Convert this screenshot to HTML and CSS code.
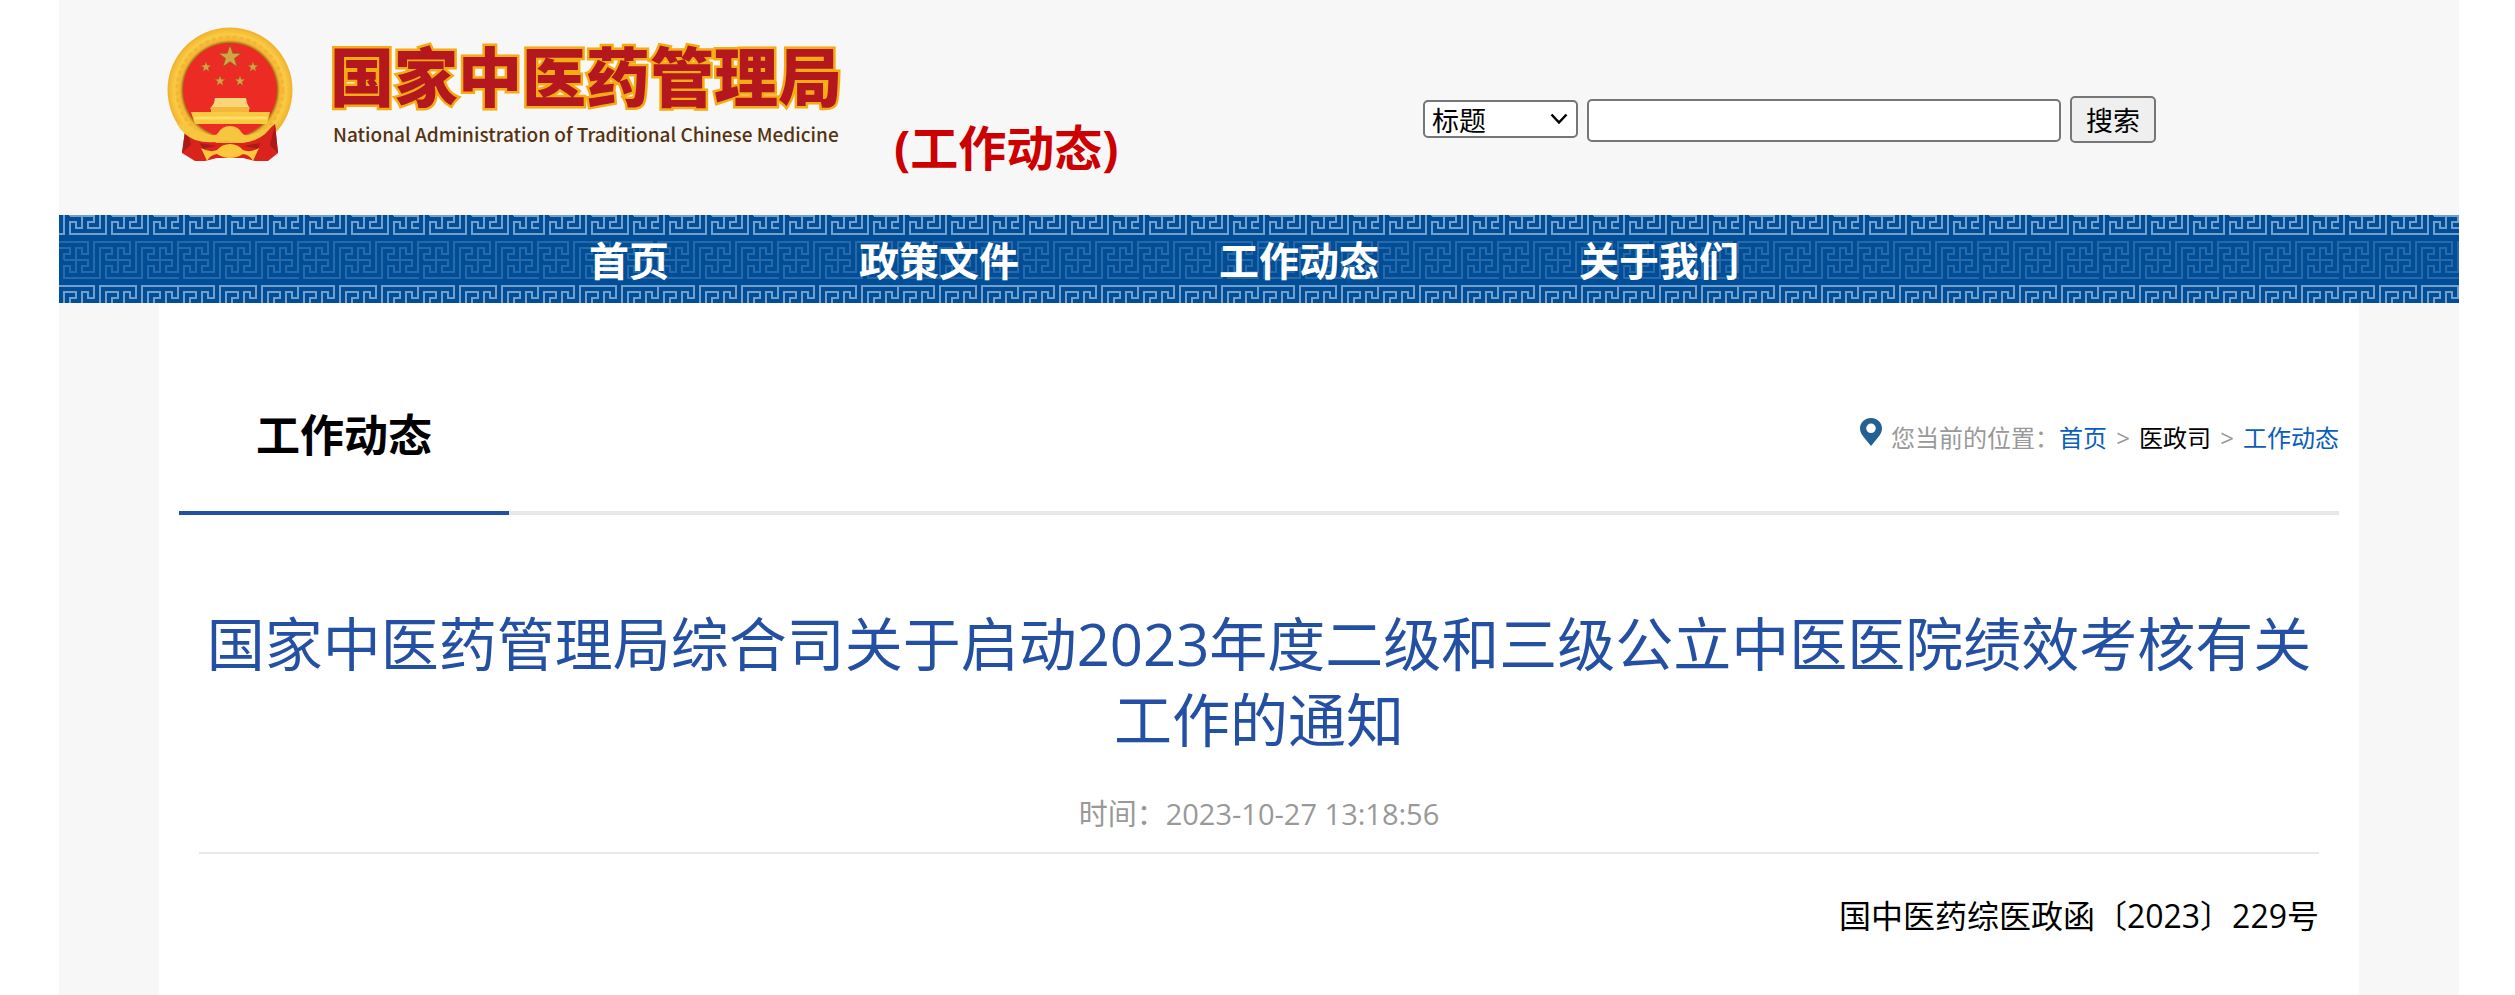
FILE: index.html
```html
<!DOCTYPE html>
<html lang="zh-CN">
<head>
    <meta charset="UTF-8">
    <meta name="viewport" content="width=device-width, initial-scale=1.0">
    <title>国家中医药管理局 - 工作动态</title>
    <link rel="stylesheet" href="styles.css">
</head>
<body>

    <div class="page">
        <header class="header">
            <svg class="emblem" viewBox="0 0 127 135" aria-hidden="true">
                <defs>
                    <path id="star" d="M0-10 2.4-3.1 9.5-3.1 3.8 1.2 5.9 8.1 0 4-5.9 8.1-3.8 1.2-9.5-3.1-2.4-3.1z"/>
                    <radialGradient id="gold" gradientUnits="userSpaceOnUse" cx="63" cy="63" r="63">
                        <stop offset=".75" stop-color="#a8741c"/>
                        <stop offset=".79" stop-color="#f2b632"/>
                        <stop offset=".88" stop-color="#fbcb45"/>
                        <stop offset="1" stop-color="#eeb02c"/>
                    </radialGradient>
                </defs>
                <circle cx="63" cy="63" r="62.5" fill="url(#gold)"/>
                <circle cx="63" cy="63" r="53" fill="none" stroke="#f3b537" stroke-width="3" stroke-dasharray="4 3"/>
                <circle cx="63" cy="63" r="47" fill="#ec2b24"/>
                <!-- 五星 -->
                <g fill="#d3a443" stroke="#8f5a1c" stroke-width=".6">
                    <use href="#star" transform="translate(63 30) scale(1.2)"/>
                    <use href="#star" transform="translate(39 40) scale(.55)"/>
                    <use href="#star" transform="translate(86 40) scale(.55)"/>
                    <use href="#star" transform="translate(53 54) scale(.55)"/>
                    <use href="#star" transform="translate(73 54) scale(.55)"/>
                </g>
                <!-- 天安门 -->
                <path d="M48 71h31l1 5 3 6H43l4-6z" fill="#fbd678"/>
                <path d="M44 80h38v6H44z" fill="#f4b63c"/>
                <path d="M24 85h79l-3 12H28z" fill="#fbc93f"/>
                <path d="M27 91h73" stroke="#fde06a" stroke-width="3"/>
                <!-- 绶带 -->
                <path d="M19 97 34 110 50 116H76L92 110 108 97 111 126 101 134 88 134 76 131H50l-12 3H28L15 126z" fill="#d9231d"/>
                <path d="M19 97 24 118 15 126zM108 97 103 118 111 126zM33 116l16 3-14 3zM93 116l-16 3 14 3z" fill="#a91a18"/>
                <path d="M20 97q10 8 24 11 5 1 7-2 4-7 12-7t12 7q2 3 7 2 14-3 24-11-6 11-18 16-10 4-20 2-3-1-5-1-5-1-5-1-5 2-10 2-10 1-20-2-12-5-18-16z" fill="#f8c63e"/>
                <path d="M34 121q9 5 16 2 5-6 13-6t13 6q7 3 16-2l-6 13q-3-6-10-7-6 4-13 4t-13-4q-7 1-10 7z" fill="#fbc83d"/>
            </svg>
            <div class="brand">
                <div class="brand-name">国家中医药管理局</div>
                <div class="brand-en">National Administration of Traditional Chinese Medicine</div>
            </div>
            <div class="channel">(工作动态)</div>
            <form class="search">
                <select class="search-type" aria-label="搜索范围">
                    <option>标题</option>
                </select>
                <input class="search-text" type="text" aria-label="关键词">
                <button class="search-btn" type="button">搜索</button>
            </form>
        </header>

        <nav class="nav">
            <a class="nav-home" href="#">首页</a>
            <a href="#">政策文件</a>
            <a href="#">工作动态</a>
            <a href="#">关于我们</a>
        </nav>

        <main class="content">
            <div class="content-head">
                <h2 class="column-title">工作动态</h2>
                <div class="position">
                    <svg class="pin" viewBox="0 0 22 28" aria-hidden="true">
                        <path fill="#245f93" fill-rule="evenodd" d="M11 0C5 0 0 4.500 0 10.500 0 14 2 17 4 19.500L11 28l7-8.500C20 17 22 14 22 10.500 22 4.500 17 0 11 0zm0 5.500a4.800 4.800 0 1 1 0 9.600 4.800 4.800 0 0 1 0-9.600z"/>
                    </svg>
                    <span>您当前的位置：</span><a href="#">首页</a><span class="sep">&gt;</span><a class="dept" href="#">医政司</a><span class="sep">&gt;</span><a href="#">工作动态</a>
                </div>
            </div>

            <article class="article">
                <h1 class="article-title">国家中医药管理局综合司关于启动2023年度二级和三级公立中医医院绩效考核有关工作的通知</h1>
                <p class="article-time">时间：2023-10-27 13:18:56</p>
                <p class="doc-number">国中医药综医政函〔2023〕229号</p>
            </article>
        </main>
    </div>

</body>
</html>
```
FILE: styles.css
```css
/* 全局 */
* {
    box-sizing: border-box;
}

body {
    margin: 0;
    background-color: #fff;
    color: #000;
    font-family: "Open Sans", "Noto Sans CJK SC", sans-serif;
}

a {
    text-decoration: none;
}

.page {
    min-height: 100vh;
    margin: 0 56px 0 59px;
    background-color: #f7f7f7;
    display: flex;
    flex-direction: column;
}

/* 页头 */
.header {
    height: 215px;
    padding: 27px 303px 0 108px;
    display: flex;
    align-items: flex-start;
}

.emblem {
    width: 127px;
    height: 135px;
    flex: none;
}

.brand {
    margin: 10px 0 0 36px;
    white-space: nowrap;
}

.brand-name {
    font-family: "Noto Sans CJK SC", sans-serif;
    font-size: 64px;
    line-height: 72px;
    font-weight: 900;
    color: #b5171f;
    -webkit-text-stroke: 5px #f5ac12;
    paint-order: stroke fill;
}

.brand-en {
    margin: 9px 0 0 3px;
    font-family: "Noto Sans CJK SC", sans-serif;
    font-size: 19px;
    line-height: 32px;
    font-weight: 500;
    color: #553311;
}

.channel {
    margin: 89px 0 0 52px;
    font-size: 48px;
    line-height: 64px;
    font-weight: bold;
    color: #c00;
    white-space: nowrap;
}

.search {
    margin: 69px 0 0 auto;
    display: flex;
    align-items: baseline;
    gap: 9px;
}

.search-type,
.search-text,
.search-btn {
    border: 2px solid #767676;
    border-radius: 5px;
    font-family: inherit;
    font-size: 27px;
    color: #000;
}

.search-type {
    width: 155px;
    height: 38px;
    padding: 0 7px;
    appearance: none;
    background: #fff url("data:image/svg+xml,%3Csvg xmlns='http://www.w3.org/2000/svg' width='18' height='12'%3E%3Cpath d='M1.500 1.500l7.500 8 7.500-8' fill='none' stroke='%23000' stroke-width='2.500'/%3E%3C/svg%3E") no-repeat right 8px center;
}

.search-text {
    width: 474px;
    height: 43px;
    background-color: #fff;
}

.search-btn {
    width: 86px;
    height: 47px;
    padding: 0;
    background-color: #efefef;
    cursor: pointer;
}

/* 导航，回纹背景 */
.nav {
    height: 88px;
    padding-left: 440px;
    display: flex;
    background: #004e98 url("data:image/svg+xml,%3Csvg xmlns='http://www.w3.org/2000/svg' width='120' height='88' fill='none' stroke-width='2'%3E%3Cdefs%3E%3Cpath id='k' d='M-12 0H12V6H6V12H18V-18H54V-6H48V-12H42V0M0-12V12H-6V6H-12V18H24V-12H36V-6H30V0'/%3E%3Cg id='r'%3E%3Cuse href='%23k' x='-42'/%3E%3Cuse href='%23k'/%3E%3Cuse href='%23k' x='42'/%3E%3Cuse href='%23k' x='84'/%3E%3C/g%3E%3C/defs%3E%3Cuse href='%23r' x='17' y='45' stroke='%232a69a7'/%3E%3Cuse href='%23r' x='23' y='1' stroke='%23749fc9'/%3E%3Cuse href='%23r' x='23' y='89' stroke='%23749fc9'/%3E%3C/svg%3E") repeat-x;
}

.nav a {
    width: 360px;
    color: #fff;
    font-size: 40px;
    line-height: 92px;
    font-weight: bold;
    text-align: center;
}

.nav .nav-home {
    width: 260px;
}

/* 内容 */
.content {
    flex: 1;
    margin: 0 100px;
    padding: 0 20px;
    background-color: #fff;
}

.content-head {
    height: 212px;
    border-bottom: 4px solid #e8e8e8;
    display: flex;
    justify-content: space-between;
}

.column-title {
    width: 330px;
    height: 212px;
    margin: 0;
    padding-top: 52px;
    border-bottom: 4px solid #2450a4;
    font-size: 44px;
    line-height: 160px;
    text-align: center;
}

.position {
    padding-top: 115px;
    display: flex;
    align-items: flex-start;
    color: #999;
    font-size: 24px;
    line-height: 40px;
}

.pin {
    width: 22px;
    height: 28px;
    margin-right: 9px;
}

.position a {
    color: #0a5dbb;
}

.position .dept {
    color: #000;
}

.sep {
    width: 32px;
    text-align: center;
}

.article {
    padding: 91px 20px 0;
}

.article-title {
    margin: 0;
    color: #2450a4;
    font-size: 58px;
    line-height: 76px;
    font-weight: normal;
    text-align: center;
}

.article-time {
    margin: 0;
    padding: 34px 0 16px;
    border-bottom: 2px solid #e8e8e8;
    color: #999;
    font-size: 29px;
    line-height: 44px;
    text-align: center;
}

.doc-number {
    margin: 38px 0 0;
    font-size: 32px;
    line-height: 48px;
    text-align: right;
}
```
